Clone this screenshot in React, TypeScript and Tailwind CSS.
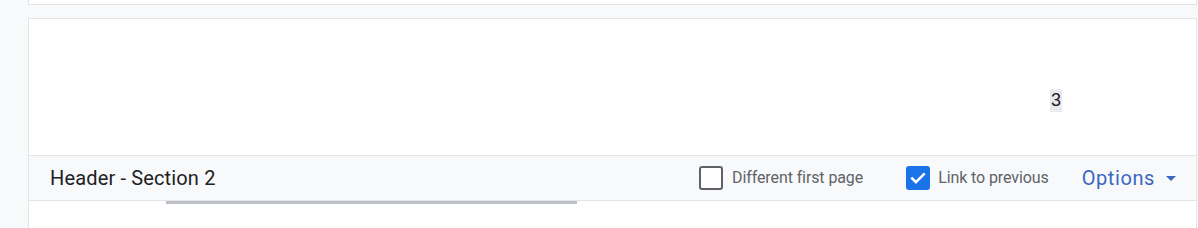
import React from 'react';

const Checkbox: React.FC<{ checked?: boolean }> = ({ checked }) =>
  checked ? (
    <span className="flex h-[24px] w-[24px] items-center justify-center rounded-[3px] bg-[#1a73e8]">
      <svg viewBox="0 0 24 24" className="h-[20px] w-[20px]" fill="none" stroke="#ffffff" strokeWidth="3" strokeLinecap="square">
        <path d="M5 12.5l4.5 4.5L19 7.5" />
      </svg>
    </span>
  ) : (
    <span className="h-[24px] w-[24px] rounded-[3px] border-2 border-[#5f6368] bg-white" />
  );

export default function App() {
  return (
    <div className="flex h-[228px] w-[1198px] flex-col overflow-hidden bg-[#f8f9fa] pl-[28px] pr-[1px] font-['Roboto',sans-serif]">
      {/* bottom of previous page */}
      <div className="h-[5px] border-b border-l border-r border-[#e3e4e6] bg-white" />
      <div className="h-[13px]" />

      {/* current page */}
      <div className="flex flex-1 flex-col border-l border-r border-t border-[#e3e4e6] bg-white">
        <div className="flex h-[136px] justify-end pr-[134px] pt-[70px]">
          <span className="h-[23px] bg-[#e8eaed] px-[1px] font-['Liberation_Sans',sans-serif] text-[18px] leading-[23px] text-[#202124]">3</span>
        </div>

        <div className="flex h-[46px] items-center border-y border-[#e3e4e6] bg-[#f8f9fa] pl-[21px] pr-[20px]">
          <span className="text-[20px] tracking-[0.15px] text-[#202124]">Header - Section 2</span>
          <div className="flex-1" />
          <label className="flex items-center gap-[9px]">
            <Checkbox />
            <span className="text-[16px] tracking-[-0.1px] text-[#5f6368]">Different first page</span>
          </label>
          <label className="ml-[43px] flex items-center gap-[8px]">
            <Checkbox checked />
            <span className="text-[16px] tracking-[-0.1px] text-[#5f6368]">Link to previous</span>
          </label>
          <button className="ml-[33px] flex items-center gap-[11px] text-[20px] tracking-[0.6px] text-[#3b67c0]">
            Options
            <svg viewBox="0 0 10 5" className="h-[5px] w-[10px]">
              <path d="M0 0h10L5 5z" fill="#3b67c0" />
            </svg>
          </button>
        </div>

        <div className="flex-1">
          <div className="ml-[137px] h-[3px] w-[411px] bg-[#bdc1c6]" />
        </div>
      </div>
    </div>
  );
}
